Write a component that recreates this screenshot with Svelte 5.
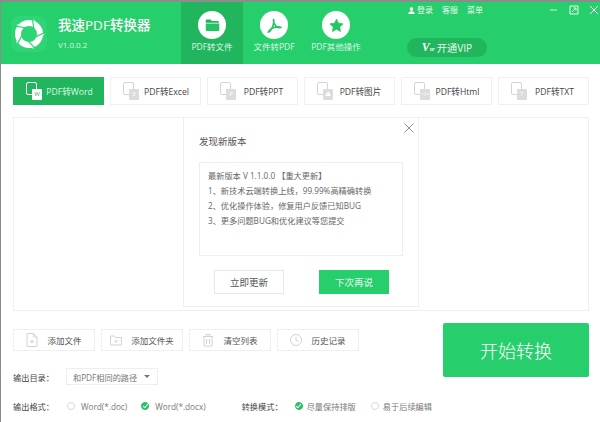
<script>
  const mainTabs = [
    { label: 'PDF转文件', icon: 'folder', active: true },
    { label: '文件转PDF', icon: 'pdf' },
    { label: 'PDF其他操作', icon: 'star' }
  ];

  const formats = [
    { label: 'PDF转Word', badge: 'W', active: true },
    { label: 'PDF转Excel', badge: 'X' },
    { label: 'PDF转PPT', badge: 'P' },
    { label: 'PDF转图片', badge: '▲' },
    { label: 'PDF转Html', badge: '</>' },
    { label: 'PDF转TXT', badge: 'T' }
  ];

  const notes = [
    '最新版本 V 1.1.0.0 【重大更新】',
    '1、新技术云端转换上线，99.99%高精确转换',
    '2、优化操作体验，修复用户反馈已知BUG',
    '3、更多问题BUG和优化建议等您提交'
  ];

  const tools = [
    { label: '添加文件', icon: 'file' },
    { label: '添加文件夹', icon: 'dir' },
    { label: '清空列表', icon: 'trash' },
    { label: '历史记录', icon: 'clock' }
  ];

  const logoAngles = [0, 72, 144, 216, 288];
</script>

<div class="app">
  <header>
    <div class="brand">
      <div class="logo">
        <svg viewBox="0 0 36 36" width="36" height="36">
          <rect width="36" height="36" rx="8" fill="#2ed574" />
          <circle cx="18" cy="18" r="11" fill="none" stroke="#fff" stroke-width="6" />
          {#each logoAngles as a}
            <g transform="rotate({a} 18 18)">
              <path d="M22.500 2.800L28.500 12.500 24.800 13.800 22.800 5.500z" fill="#fff" />
              <path d="M21.500 3L22.800 12.500" stroke="#2ed574" stroke-width="1.200" />
            </g>
          {/each}
        </svg>
      </div>
      <div class="brand-text">
        <div class="title">我速PDF转换器</div>
        <div class="version">V1.0.0.2</div>
      </div>
    </div>

    <nav>
      {#each mainTabs as tab}
        <div class="main-tab" class:active={tab.active}>
          <div class="circle">
            {#if tab.icon === 'folder'}
              <svg viewBox="0 0 20 18" width="15" height="14">
                <path d="M1 3q0-1.500 1.500-1.500h5l1.500 2h8q1.500 0 1.500 1.500v1H1z" fill="#1fb557" />
                <path d="M1 7h18v8.500q0 1.500-1.500 1.500h-15Q1 17 1 15.500z" fill="#24c463" />
              </svg>
            {:else if tab.icon === 'pdf'}
              <svg viewBox="0 0 20 20" width="15" height="15" fill="none" stroke="#24c463" stroke-width="2.200">
                <path d="M9 1.500c-1 3 1 7 3 9.500 1.500 1.800 4.500 2 6 1.500-2-1.500-8-.5-11.500 1.500-2 1.200-4 3-4.500 4.500 2-.5 4-3.500 5.500-7 .8-2 2-7.500 1-10" />
              </svg>
            {:else}
              <svg viewBox="0 0 20 20" width="15" height="15">
                <path d="M10 1.500l2.700 5.500 6 .8-4.400 4.200 1.100 6L10 15.100 4.600 18l1.100-6L1.300 7.800l6-.8z" fill="#24c463" stroke="#24c463" stroke-linejoin="round" />
              </svg>
            {/if}
          </div>
          <span>{tab.label}</span>
        </div>
      {/each}
    </nav>

    <div class="header-right">
      <div class="top-row">
        <div class="links">
          <span class="login">
            <svg viewBox="0 0 10 10" width="7" height="7"><circle cx="5" cy="3" r="2.600" fill="#fff" /><path d="M0.500 10q0-4 4.500-4t4.500 4z" fill="#fff" /></svg>
            登录
          </span>
          <span>客服</span>
          <span>菜单</span>
        </div>
        <div class="win-btns">
          <svg viewBox="0 0 10 10" width="10" height="10"><path d="M1 5h7" stroke="#cdf3dc" /></svg>
          <svg viewBox="0 0 10 10" width="10" height="10" fill="none" stroke="#e6f9ee"><path d="M1 1h8v8H1zM3 7l4-4M4.500 3H7v2.500" /></svg>
          <svg viewBox="0 0 10 10" width="10" height="10" fill="none" stroke="#fff"><path d="M1 1l8 8M9 1l-8 8" /></svg>
        </div>
      </div>
      <div class="vip">
        <b class="vip-mark">V<small>IP</small></b>
        开通VIP
      </div>
    </div>
  </header>

  <main>
    <div class="formats">
      {#each formats as f}
        <div class="format" class:active={f.active}>
          <span class="doc-icon">
            <i class="sheet"></i>
            <i class="badge">{f.badge}</i>
          </span>
          <span class="format-label">{f.label}</span>
        </div>
      {/each}
    </div>

    <div class="file-list">
      <div class="dialog">
        <button class="close" aria-label="关闭">
          <svg viewBox="0 0 10 10" width="10" height="10" fill="none" stroke="#777" stroke-width="0.800"><path d="M0.500 0.500l9 9M9.500 0.500l-9 9" /></svg>
        </button>
        <h2>发现新版本</h2>
        <div class="notes">
          {#each notes as line}
            <p>{line}</p>
          {/each}
        </div>
        <div class="dialog-actions">
          <button class="btn-plain">立即更新</button>
          <button class="btn-green">下次再说</button>
        </div>
      </div>
    </div>

    <div class="bottom">
      <div class="bottom-left">
        <div class="tools">
          {#each tools as t}
            <div class="tool">
              <svg viewBox="0 0 12 14" width="12" height="14" fill="none" stroke="#d2d2d2">
                {#if t.icon === 'file'}
                  <path d="M1 .500h6.500L11 4v9.500H1zM7.500 .500V4H11M4 8.500h4M6 6.500v4" />
                {:else if t.icon === 'dir'}
                  <path d="M.500 3h4l1 1.500h6v7.500H.500zM4.500 8.200h3M6 6.700v3" />
                {:else if t.icon === 'trash'}
                  <path d="M1 3.500h10M4 3.500V1.500h4v2M2 3.500v9.500h8V3.500M4.500 6v4.500M7.500 6v4.500" />
                {:else}
                  <circle cx="6" cy="7" r="5.500" /><path d="M6 3.500V7l2.500 1.500" />
                {/if}
              </svg>
              <span>{t.label}</span>
            </div>
          {/each}
        </div>
        <div class="dir-row">
          <span class="field-label">输出目录：</span>
          <div class="select">和PDF相同的路径<i class="caret"></i></div>
        </div>
      </div>
      <button class="start">开始转换</button>
    </div>

    <div class="options">
      <span class="field-label">输出格式：</span>
      <span class="radio"><i class="dot"></i>Word(*.doc)</span>
      <span class="radio"><i class="dot on"></i>Word(*.docx)</span>
      <span class="field-label mode">转换模式：</span>
      <span class="radio small"><i class="dot on"></i>尽量保持排版</span>
      <span class="radio small"><i class="dot"></i>易于后续编辑</span>
    </div>
  </main>
</div>

<style>
  :global(body) {
    margin: 0;
    background: #fff;
  }

  .app {
    width: 600px;
    height: 422px;
    box-sizing: border-box;
    border-top: 2px solid #8c8c8c;
    border-left: 1px solid #8c8c8c;
    font-family: "Open Sans", "Noto Sans CJK SC", sans-serif;
    font-size: 10px;
    color: #555;
    overflow: hidden;
  }

  header {
    height: 62px;
    display: flex;
    background: #27ce6c;
    color: #fff;
  }

  .brand {
    width: 180px;
    display: flex;
    align-items: center;
    gap: 11px;
    padding: 0 0 0 10px;
    box-sizing: border-box;
  }

  .logo {
    line-height: 0;
    margin-top: 2px;
  }

  .title {
    font-size: 13.500px;
    font-weight: 500;
    line-height: 20px;
    white-space: nowrap;
  }

  .version {
    font-size: 8px;
    line-height: 12px;
    margin-top: 4px;
    color: #d8f6e4;
  }

  nav {
    display: flex;
  }

  .main-tab {
    width: 62px;
    display: flex;
    flex-direction: column;
    align-items: center;
    padding-top: 9px;
    box-sizing: border-box;
    font-size: 8.500px;
    color: #dcf7e7;
  }

  .main-tab.active {
    background: #21b65d;
  }

  .main-tab span {
    margin-top: 1px;
    white-space: nowrap;
    line-height: 14px;
  }

  .circle {
    width: 28px;
    height: 28px;
    border-radius: 50%;
    background: #fff;
    display: flex;
    align-items: center;
    justify-content: center;
  }

  .header-right {
    flex: 1;
    display: flex;
    flex-direction: column;
    padding-left: 40px;
  }

  .top-row {
    display: flex;
    justify-content: space-between;
    padding: 0 1px 0 1px;
    height: 18px;
  }

  .links {
    display: flex;
    gap: 9px;
    font-size: 8px;
    line-height: 16px;
    color: #e6f9ee;
  }

  .login svg {
    vertical-align: -0.5px;
  }

  .win-btns {
    display: flex;
    gap: 10px;
    margin-top: 3px;
  }

  .vip {
    margin-top: 18px;
    width: 80px;
    height: 19px;
    border-radius: 10px;
    background: #21b65d;
    display: flex;
    align-items: center;
    justify-content: center;
    gap: 2px;
    font-size: 10.200px;
    color: #e4f8ec;
  }

  .vip-mark {
    font-style: italic;
    font-family: "Liberation Serif", serif;
    font-size: 12px;
    color: #fff;
  }

  .vip-mark small {
    font-size: 5px;
    font-style: normal;
  }

  main {
    padding: 13px 11px 0 12px;
  }

  .formats {
    display: flex;
    gap: 6px;
  }

  .format {
    flex: 0 0 91px;
    height: 28px;
    box-sizing: border-box;
    border: 1px solid #f0f0f0;
    display: flex;
    align-items: center;
    padding: 0 6px 0 12px;
    font-size: 8.600px;
    color: #444;
  }

  .format.active {
    background: #21b65d;
    border-color: #21b65d;
    color: #dff7e8;
  }

  .format-label {
    flex: 1;
    text-align: center;
    white-space: nowrap;
  }

  .doc-icon {
    position: relative;
    width: 16px;
    height: 18px;
    flex: none;
  }

  .sheet {
    position: absolute;
    left: 0;
    top: 0;
    width: 11px;
    height: 13px;
    box-sizing: border-box;
    border: 1px solid #d4d4d4;
    border-radius: 2px;
    background: #fff;
  }

  .badge {
    position: absolute;
    right: 0;
    bottom: 0;
    width: 10px;
    height: 11px;
    background: #dcdcdc;
    color: #fff;
    border-radius: 1px;
    font-style: normal;
    font-size: 6px;
    line-height: 11px;
    text-align: center;
  }

  .format.active .sheet {
    border-color: #fff;
    background: transparent;
  }

  .format.active .badge {
    background: #fff;
    color: #21b65d;
  }

  .file-list {
    position: relative;
    height: 194px;
    margin-top: 12px;
    box-sizing: border-box;
    border: 1px solid #efefef;
  }

  .dialog {
    position: absolute;
    left: 169px;
    top: 0;
    width: 236px;
    height: 189px;
    box-sizing: border-box;
    border: 1px solid #efefef;
    border-top: 0;
    background: #fff;
    padding: 16px 15px 0;
  }

  .close {
    position: absolute;
    right: 4px;
    top: 5px;
    padding: 0;
    border: 0;
    background: none;
    line-height: 0;
  }

  h2 {
    margin: 0;
    font-size: 9.500px;
    font-weight: 400;
    line-height: 16px;
    color: #555;
  }

  .notes {
    margin-top: 12px;
    height: 94px;
    box-sizing: border-box;
    border: 1px solid #eeeeee;
    padding: 5px 0 0 8px;
  }

  .notes p {
    margin: 0;
    font-size: 8.200px;
    line-height: 15px;
    color: #666;
    white-space: nowrap;
  }

  .dialog-actions {
    display: flex;
    justify-content: space-between;
    padding: 14px 14px 0 15px;
  }

  .dialog-actions button {
    width: 70px;
    height: 24px;
    box-sizing: border-box;
    font: inherit;
    font-size: 9.500px;
    padding: 0;
  }

  .btn-plain {
    background: #fff;
    border: 1px solid #e8e8e8;
    color: #555;
  }

  .btn-green {
    background: #27ce6c;
    border: 0;
    color: #e4f8ec;
  }

  .bottom {
    display: flex;
    justify-content: space-between;
    margin-top: 12px;
  }

  .bottom-left {
    padding-top: 6px;
  }

  .tools {
    display: flex;
    gap: 6px;
  }

  .tool {
    width: 82px;
    height: 22px;
    box-sizing: border-box;
    border: 1px solid #efefef;
    display: flex;
    align-items: center;
    justify-content: center;
    gap: 9px;
    font-size: 8.500px;
    color: #555;
  }

  .dir-row {
    display: flex;
    align-items: center;
    margin-top: 17px;
  }

  .field-label {
    width: 53px;
    flex: none;
    font-size: 8.200px;
    color: #444;
    white-space: nowrap;
  }

  .select {
    width: 92px;
    height: 17px;
    box-sizing: border-box;
    border: 1px solid #eeeeee;
    display: flex;
    align-items: center;
    padding-left: 6px;
    gap: 7px;
    font-size: 8.200px;
    color: #777;
  }

  .caret {
    width: 0;
    height: 0;
    border-left: 3px solid transparent;
    border-right: 3px solid transparent;
    border-top: 3px solid #777;
  }

  .start {
    width: 146px;
    height: 54px;
    border: 0;
    border-radius: 2px;
    background: #27ce6c;
    color: #fff;
    font: inherit;
    font-size: 18px;
    font-weight: 300;
    padding: 0;
  }

  .options {
    display: flex;
    align-items: center;
    margin-top: 15px;
    white-space: nowrap;
  }

  .radio {
    display: inline-flex;
    align-items: center;
    gap: 6px;
    font-size: 8.200px;
    color: #777;
    margin-right: 13px;
  }

  .radio.small {
    margin-right: 14px;
    gap: 4px;
  }

  .field-label.mode {
    margin-left: 23px;
    margin-right: -1px;
  }

  .dot {
    width: 8px;
    height: 8px;
    box-sizing: border-box;
    border-radius: 50%;
    border: 1px solid #d8d8d8;
    flex: none;
    margin-left: 1px;
  }

  .dot.on {
    background: #27c066;
    border-color: #27c066;
    position: relative;
  }

  .dot.on::after {
    content: '';
    position: absolute;
    left: 1.500px;
    top: 0;
    width: 2px;
    height: 3.500px;
    border-right: 1px solid #fff;
    border-bottom: 1px solid #fff;
    transform: rotate(40deg);
  }
</style>
